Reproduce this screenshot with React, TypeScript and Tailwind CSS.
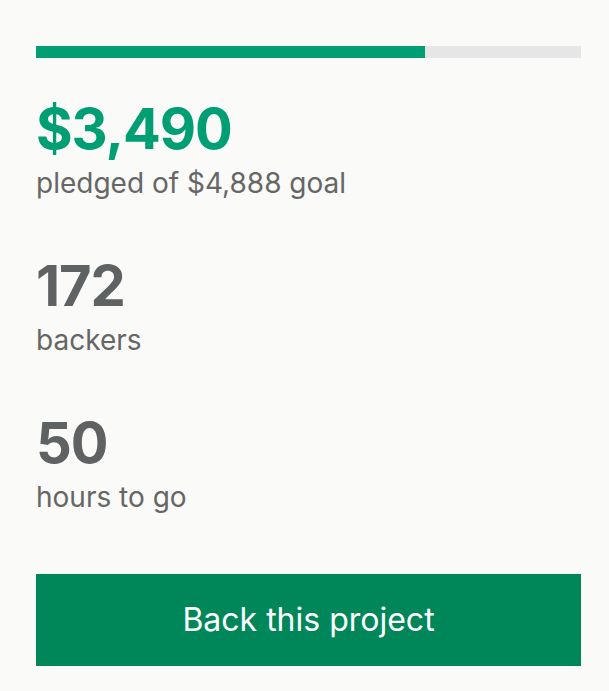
export default function App() {
  const pledged = 3490
  const goal = 4888
  const pct = Math.min(100, (pledged / goal) * 100)

  return (
    <div className="min-h-screen w-full bg-[#fafaf9] pl-9 pr-7 pt-[46px] font-['Inter',sans-serif]">
      {/* progress */}
      <div className="h-3 w-full bg-[#e6e6e6]">
        <div className="h-full bg-[#009e73]" style={{ width: `${pct}%` }} />
      </div>

      <div className="mt-[40px] flex flex-col gap-[55px]">
        <div>
          <div className="text-[56px] font-bold leading-[62px] tracking-[-0.02em] text-[#009e73]">$3,490</div>
          <div className="mt-[6px] text-[28px] leading-[34px] text-[#666]">pledged of $4,888 goal</div>
        </div>
        <div>
          <div className="text-[56px] font-bold leading-[62px] tracking-[-0.02em] text-[#5f6262]">172</div>
          <div className="mt-[6px] text-[28px] leading-[34px] text-[#666]">backers</div>
        </div>
        <div>
          <div className="text-[56px] font-bold leading-[62px] tracking-[-0.02em] text-[#5f6262]">50</div>
          <div className="mt-[6px] text-[28px] leading-[34px] text-[#666]">hours to go</div>
        </div>
      </div>

      <button className="mt-[60px] flex h-[92px] w-full items-center justify-center bg-[#008759] text-[32px] text-white">
        Back this project
      </button>
    </div>
  )
}
